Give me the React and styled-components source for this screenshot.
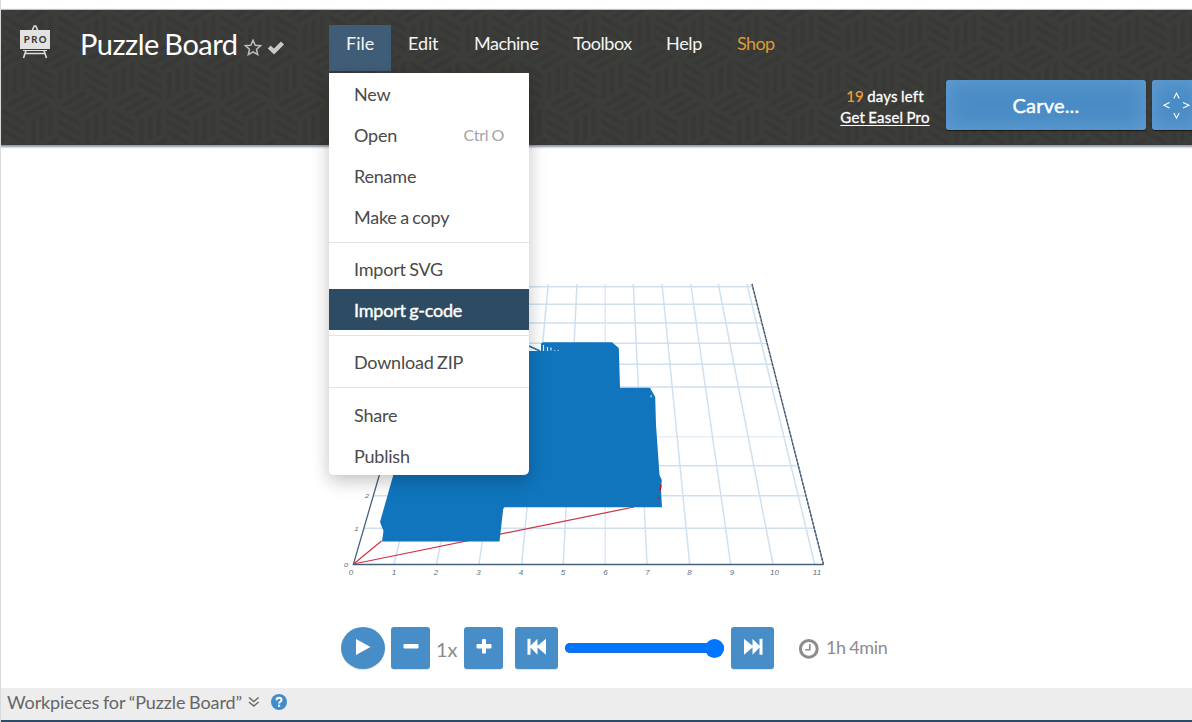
import React from 'react';
import styled, { createGlobalStyle } from 'styled-components';

const Global = createGlobalStyle`
  * { box-sizing: border-box; }
  body { margin: 0; background: #fff; font-family: Lato, "Liberation Sans", sans-serif; }
`;

const Page = styled.div`
  width: 1192px;
  height: 722px;
  display: flex;
  flex-direction: column;
  overflow: hidden;
  border-left: 1px solid #d9d9d9;
  background: #fff;
`;

const TopStrip = styled.div`
  height: 10px;
  flex: none;
  border-bottom: 1px solid #d9dbdc;
`;

const Header = styled.header`
  position: relative;
  z-index: 2;
  flex: none;
  height: 135px;
  display: flex;
  background: #3b3d39;
  box-shadow: 0 1px 2px 1px rgba(74, 90, 115, 0.65);
`;

const Texture = styled.svg`
  position: absolute;
  inset: 0;
  width: 100%;
  height: 100%;
`;

const Brand = styled.div`
  position: relative;
  display: flex;
  align-items: flex-start;
  width: 328px;
  flex: none;
  padding: 15px 0 0 18px;
`;

const Title = styled.h1`
  margin: 1px 0 0 29px;
  width: 163px;
  font-size: 29px;
  line-height: 36px;
  font-weight: 400;
  letter-spacing: -0.5px;
  word-spacing: -1.4px;
  white-space: nowrap;
  color: #fff;
`;

const TitleIcons = styled.div`
  display: flex;
  gap: 5px;
  padding-top: 14px;
  margin-left: 1px;
`;

const Nav = styled.nav`
  position: relative;
  display: flex;
  height: 46px;
  margin-top: 15px;
`;

const NavItem = styled.div`
  width: ${(p) => p.$w}px;
  height: 46px;
  padding-left: 17px;
  line-height: 37px;
  font-size: 18px;
  letter-spacing: ${(p) => p.$track || 0}px;
  white-space: nowrap;
  color: ${(p) => (p.$accent ? '#dd9b35' : '#f4f4f4')};
  background: ${(p) => (p.$open ? '#405d77' : 'transparent')};
`;

const Menu = styled.div`
  position: absolute;
  left: 0;
  top: 48px;
  width: 200px;
  height: 402px;
  padding-top: 1px;
  overflow: hidden;
  background: #fff;
  border-radius: 0 0 5px 5px;
`;

const MenuShadow = styled.div`
  position: absolute;
  left: 0;
  top: 48px;
  width: 200px;
  height: 402px;
  border-radius: 0 0 5px 5px;
  box-shadow: 0 6px 18px rgba(0, 0, 0, 0.24);
`;

const MenuItem = styled.div`
  display: flex;
  justify-content: space-between;
  height: 41px;
  line-height: ${(p) => (p.$low ? 43 : 41)}px;
  padding: 0 25px;
  font-size: 18px;
  white-space: nowrap;
  letter-spacing: -0.22px;
  word-spacing: -0.9px;
  color: ${(p) => (p.$active ? '#fff' : '#4a4a4a')};
  background: ${(p) => (p.$active ? '#2e4b64' : 'transparent')};
  -webkit-text-stroke: ${(p) => (p.$active ? '0.4px #fff' : '0')};
`;

const Shortcut = styled.span`
  line-height: 40px;
  letter-spacing: -0.2px;
  font-size: 16px;
  color: #a3a3a3;
`;

const Divider = styled.div`
  height: 1px;
  background: #e3e3e3;
  margin: ${(p) => p.$above}px 0 ${(p) => p.$below}px;
`;

const Actions = styled.div`
  position: relative;
  display: flex;
  margin-left: auto;
  padding-top: 70px;
  margin-right: -9px;
`;

const Trial = styled.div`
  width: 92px;
  margin: 6px 15px 0 0;
  text-align: center;
  font-size: 15px;
  line-height: 21px;
  letter-spacing: 0.2px;
  word-spacing: -0.8px;
  white-space: nowrap;
  color: #fff;
  -webkit-text-stroke: 0.3px #fff;
  b { font-weight: 400; color: #e8a33d; -webkit-text-stroke: 0.2px #e8a33d; }
  span { text-decoration: underline; text-underline-offset: 2px; }
`;

const BlueButton = styled.div`
  width: ${(p) => p.$w}px;
  height: 50px;
  margin-right: ${(p) => p.$gap || 0}px;
  display: flex;
  align-items: center;
  justify-content: ${(p) => (p.$gap ? 'center' : 'flex-start')};
  border-radius: 3px;
  background: #4a8cc6;
  box-shadow: inset 0 0 22px rgba(120, 175, 220, 0.55), 0 1px 1px rgba(0, 0, 0, 0.6);
  color: #fff;
  font-size: 20px;
  letter-spacing: 0.2px;
  -webkit-text-stroke: 0.4px #fff;
`;

const Stage = styled.main`
  flex: 1;
  min-height: 0;
  display: flex;
  flex-direction: column;
`;

const Scene = styled.svg`
  display: block;
  flex: none;
  width: 1191px;
  height: 482px;
`;

const Player = styled.div`
  display: flex;
  align-items: center;
  height: 42px;
  padding-left: 340px;
  color: #8c8c8c;
  font-size: 18px;
`;

const PlayerButton = styled.div`
  width: ${(p) => p.$w}px;
  height: 42px;
  margin-left: ${(p) => p.$ml || 0}px;
  display: flex;
  justify-content: center;
  align-items: center;
  padding-bottom: 3px;
  border-radius: ${(p) => (p.$round ? '50%' : '3px')};
  background: #478dc7;
  box-shadow: 0 1px 1px rgba(0, 0, 0, 0.12);
`;

const Speed = styled.span`
  width: 34px;
  padding: 1px 0 0 6px;
  font-size: 20px;
`;

const Slider = styled.div`
  width: 159px;
  height: 10px;
  margin: 0 7px;
  display: flex;
  align-items: center;
  justify-content: flex-end;
  border-radius: 5px;
  background: #0075ff;
  box-shadow: inset 0 0 0 1px #1c6fd6;
`;

const Thumb = styled.div`
  width: 19px;
  height: 19px;
  border-radius: 50%;
  background: #0075ff;
`;

const Duration = styled.div`
  display: flex;
  align-items: center;
  gap: 7px;
  margin: 0 0 2px 24px;
  letter-spacing: -0.35px;
  word-spacing: -0.8px;
  svg { margin-top: 3px; }
`;

const Footer = styled.footer`
  flex: none;
  height: 34px;
  padding: 0 0 4px 6px;
  display: flex;
  align-items: center;
  background: #ededed;
  border-bottom: 2px solid #2c4b66;
  color: #666;
  font-size: 18px;
`;

const FooterTitle = styled.span`
  width: 241px;
  letter-spacing: -0.1px;
  word-spacing: -0.8px;
  white-space: nowrap;
`;

/* Isometric cube motif: every face carries three slats. */
const W = 54.33;
const H = 94.1;
const HALF = W / 2;
const RISE = H / 6;
const FACES = [
  { o: [0, 0], u: [HALF, -RISE], v: [HALF, RISE] },
  { o: [0, 0], u: [HALF, RISE], v: [0, 2 * RISE] },
  { o: [HALF, RISE], u: [0, 2 * RISE], v: [HALF, -RISE] },
];
const SLATS = [[0.1, 0.27], [0.415, 0.585], [0.73, 0.9]];
const facePoint = (f, a, b) =>
  `${(f.o[0] + f.u[0] * a + f.v[0] * b).toFixed(2)},${(f.o[1] + f.u[1] * a + f.v[1] * b).toFixed(2)}`;

const Cube = ({ x, y }) => (
  <g transform={`translate(${x} ${y})`}>
    {FACES.map((f, i) =>
      SLATS.map(([a, b]) => (
        <polygon
          key={`${i}-${a}`}
          points={[facePoint(f, 0.08, a), facePoint(f, 0.92, a), facePoint(f, 0.92, b), facePoint(f, 0.08, b)].join(' ')}
        />
      ))
    )}
  </g>
);

const CubeTexture = () => (
  <Texture>
    <defs>
      <pattern id="cubes" width={W} height={H} patternUnits="userSpaceOnUse" patternTransform="translate(0 94)">
        <g fill="#393836">
          <Cube x={0} y={0} />
          <Cube x={0} y={H} />
          <Cube x={HALF} y={H / 2} />
          <Cube x={-HALF} y={H / 2} />
          <Cube x={HALF} y={-H / 2} />
          <Cube x={-HALF} y={-H / 2} />
        </g>
      </pattern>
    </defs>
    <rect width="100%" height="100%" fill="url(#cubes)" />
  </Texture>
);

const EaselLogo = () => (
  <svg width="32" height="34" viewBox="0 0 32 34">
    <path d="M13 6 15.200 1h1.600L19 6M4.500 33 7 25.500M27.500 33 25 25.500M5.500 28.500h21" fill="none" stroke="#dedede" strokeWidth="1.600" />
    <rect x="1" y="5" width="30" height="19" fill="#e2e2e2" />
    <path d="M4 25.500h24" stroke="#e2e2e2" strokeWidth="1" />
    <text x="16.800" y="18" textAnchor="middle" fontFamily="Lato" fontWeight="900" fontSize="9.500" letterSpacing="1.400" fill="#3b3d39">PRO</text>
  </svg>
);

const Star = () => (
  <svg width="18" height="17" viewBox="0 0 18 17">
    <path d="M9 1.200 11.200 6.200 16.600 6.700 12.500 10.200 13.700 15.600 9 12.800 4.300 15.600 5.500 10.200 1.400 6.700 6.800 6.200Z" fill="none" stroke="#bdbdbd" strokeWidth="1.500" />
  </svg>
);

const Check = () => (
  <svg width="18" height="17" viewBox="0 0 18 17">
    <path d="M2.200 8 7 12.500 15.500 4" fill="none" stroke="#c9c9c9" strokeWidth="4.200" />
  </svg>
);

const Jog = () => (
  <svg width="49" height="50" viewBox="0 0 49 50" fill="none" stroke="#fff" strokeWidth="1.100">
    <path d="M21.800 18.500 24.500 13.200 27.200 18.500M21.800 33 24.500 38 27.200 33M17.500 22.500 12 25.200 17.500 27.900M31 22.500 37 25.200 31 27.900" />
  </svg>
);

const SkipIcon = ({ flip }) => (
  <svg width="20" height="17" viewBox="0 0 20 17">
    <path
      transform={flip ? 'translate(20 0) scale(-1 1)' : undefined}
      d="M0.500 0.700h3v7l7-7v7l8.500-7v16l-8.500-7.300v7.300l-7-7.300v7.300h-3z"
      fill="#fff"
    />
  </svg>
);

const VERTICALS = [
  [394, 463], [436.5, 491.500], [479, 520], [521.7, 548.3], [563.3, 577], [605.3, 605.3],
  [647, 633.3], [689.7, 662], [730.7, 690.7], [773, 718.3], [814.7, 747],
];
const HORIZONTALS = [286.7, 304.3, 323, 343.3, 364.3, 387, 436.7, 465.7, 495.7, 528.3];
const TICKS = [351, 394, 436, 478.500, 521, 563, 605.500, 647.500, 689.500, 732, 774.500, 817];
const leftAt = (y) => 353.3 + (564.3 - y) * 0.291;
const rightAt = (y) => 823.3 - (564.3 - y) * 0.2545;

const Toolpath = () => (
  <Scene viewBox="1 145 1191 482">
    <g stroke="#cfe1f1" strokeWidth="1.500">
      {VERTICALS.map(([b, t], i) => (
        <line key={b} x1={b} y1="564" x2={t} y2="284" opacity={i === 5 ? 0.7 : 1} />
      ))}
      {HORIZONTALS.map((y) => (
        <line key={y} x1={leftAt(y)} y1={y} x2={rightAt(y)} y2={y} opacity={y === 436.7 ? 0.5 : 1} />
      ))}
    </g>
    <path d="M435 284 353.300 564.500H823.500" fill="none" stroke="#47617c" strokeWidth="1.300" />
    <path d="M823.500 564.500 752 284" fill="none" stroke="#8a9bae" strokeWidth="1.300" />
    <path d="M823.500 564.500 752 284" fill="none" stroke="#3f5974" strokeWidth="1.300" strokeDasharray="3 1.100" />
    <path d="M381.500 541 353.500 564 634 507" fill="none" stroke="#cf3346" strokeWidth="1.200" />
    <path
      d="M430 351H541V343.500L543 342.300H612L618.800 348 620 387.800H650L655.200 397 656 425 659.500 475 661.800 480 661 490 662 507.300H504.500L503.200 509 499.500 541.500H382L383.500 531 380 522 393.300 475Z"
      fill="#1075bd"
    />
    <path d="M529 346 540 351" stroke="#1075bd" strokeWidth="1.500" />
    <path d="M543.500 345v6M547.500 347v4M551 347.500v3" stroke="#d6e8f5" strokeWidth="1.200" />
    <path d="M554 350.500h1.500M557.500 350.500h1.500" stroke="#8fc0e2" strokeWidth="1" />
    <path d="M651 395v2.500" stroke="#d6e8f5" strokeWidth="1" />
    <path d="M661 485 660 491M659 497v2" stroke="#c8102e" strokeWidth="1.500" />
    <g fontFamily="Liberation Sans" fontSize="8" fontStyle="italic" fill="#5c7188" textAnchor="middle">
      {TICKS.map((x, i) => (
        <text key={x} transform={`translate(${x} 574.500) scale(1 .8)`}>{i}</text>
      ))}
      <text transform="translate(346 566.500) scale(1 .75)">0</text>
      <text transform="translate(356.500 531) scale(1 .75)">1</text>
      <text transform="translate(367 497.500) scale(1 .75)">2</text>
    </g>
  </Scene>
);

export default function App() {
  return (
    <>
      <Global />
      <Page>
        <TopStrip />
        <Header>
          <CubeTexture />
          <Brand>
            <EaselLogo />
            <Title>Puzzle Board</Title>
            <TitleIcons>
              <Star />
              <Check />
            </TitleIcons>
          </Brand>
          <Nav>
            <NavItem $open $w={62}>File</NavItem>
            <NavItem $w={66} $track={-0.1}>Edit</NavItem>
            <NavItem $w={99} $track={-0.5}>Machine</NavItem>
            <NavItem $w={93} $track={-0.45}>Toolbox</NavItem>
            <NavItem $w={71} $track={-0.3}>Help</NavItem>
            <NavItem $w={70} $track={-0.6} $accent>Shop</NavItem>
            <MenuShadow />
            <Menu>
              <MenuItem>New</MenuItem>
              <MenuItem>Open<Shortcut>Ctrl O</Shortcut></MenuItem>
              <MenuItem>Rename</MenuItem>
              <MenuItem>Make a copy</MenuItem>
              <Divider $above={4} $below={5} />
              <MenuItem $low>Import SVG</MenuItem>
              <MenuItem $active $low>Import g-code</MenuItem>
              <Divider $above={5} $below={6} />
              <MenuItem>Download ZIP</MenuItem>
              <Divider $above={4} $below={7} />
              <MenuItem>Share</MenuItem>
              <MenuItem>Publish</MenuItem>
            </Menu>
          </Nav>
          <Actions>
            <Trial>
              <b>19</b> days left<br />
              <span>Get Easel Pro</span>
            </Trial>
            <BlueButton $w={200} $gap={6}>Carve...</BlueButton>
            <BlueButton $w={49}><Jog /></BlueButton>
          </Actions>
        </Header>
        <Stage>
          <Toolpath />
          <Player>
            <PlayerButton $w={44} $round>
              <svg width="16" height="16" viewBox="0 0 16 16"><path d="M1 0 15.500 8 1 16z" fill="#fff" /></svg>
            </PlayerButton>
            <PlayerButton $w={39} $ml={6}>
              <svg width="16" height="16" viewBox="0 0 16 16"><rect x="0.500" y="5" width="15" height="4.500" rx="1" fill="#fff" /></svg>
            </PlayerButton>
            <Speed>1x</Speed>
            <PlayerButton $w={39}>
              <svg width="16" height="16" viewBox="0 0 16 16"><path transform="translate(0 -0.500)" d="M6 1.500Q6 0.500 7 0.500H9Q10 0.500 10 1.500V5.500H14.500Q15.500 5.500 15.500 6.500V9Q15.500 10 14.500 10H10V14Q10 15 9 15H7Q6 15 6 14V10H1.500Q0.500 10 0.500 9V6.500Q0.500 5.500 1.500 5.500H6Z" fill="#fff" /></svg>
            </PlayerButton>
            <PlayerButton $w={43} $ml={12}><SkipIcon /></PlayerButton>
            <Slider><Thumb /></Slider>
            <PlayerButton $w={43}><SkipIcon flip /></PlayerButton>
            <Duration>
              <svg width="21" height="21" viewBox="0 0 21 21">
                <circle cx="10.800" cy="10.800" r="8.400" fill="none" stroke="#8c8c8c" strokeWidth="3" />
                <path d="M11.800 6V11.800H7.200" fill="none" stroke="#8c8c8c" strokeWidth="1.600" />
              </svg>
              <span>1h 4min</span>
            </Duration>
          </Player>
        </Stage>
        <Footer>
          <FooterTitle>Workpieces for “Puzzle Board”</FooterTitle>
          <svg width="12" height="12" viewBox="0 0 12 12">
            <path d="M1 1.500 5.800 5.500 10.600 1.500M1 6 5.800 10 10.600 6" fill="none" stroke="#666" strokeWidth="1.400" />
          </svg>
          <svg width="16" height="16" viewBox="0 0 16 16" style={{ marginLeft: 11 }}>
            <circle cx="8" cy="8" r="8" fill="#428bca" />
            <path d="M5.500 6.200Q5.600 3.800 8.100 3.800 10.500 3.900 10.500 6 10.500 7.200 9.200 7.900 8.100 8.500 8.100 9.600" fill="none" stroke="#fff" strokeWidth="2" />
            <rect x="7" y="10.700" width="2.200" height="2.100" fill="#fff" />
          </svg>
        </Footer>
      </Page>
    </>
  );
}
